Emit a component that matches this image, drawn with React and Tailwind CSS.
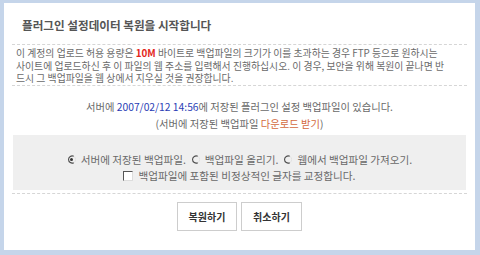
import React from 'react';

const font = { fontFamily: '"Noto Sans CJK KR", "Noto Sans", sans-serif' };

function Radio({ checked }) {
  return (
    <svg width="9" height="9" viewBox="0 0 9 9" className="inline-block shrink-0">
      <path d="M6.8 1.3 A3.6 3.6 0 1 0 6.8 7.7" fill="none" stroke="#4a4a4a" strokeWidth="1.1" />
      <path d="M6.8 1.3 A3.6 3.6 0 0 1 6.8 7.7" fill="none" stroke="#e2e2e2" strokeWidth="1" />
      {checked && <circle cx="4.5" cy="4.5" r="1.5" fill="#333" />}
    </svg>
  );
}

export default function App() {
  return (
    <div
      className="w-[480px] h-[255px] bg-[#c5d5ea] pt-[3px] pl-[4px] pr-[5px] pb-[5px] text-[#6a6a6a]"
      style={font}
    >
      <div className="h-full bg-white flex flex-col">
        <h1 className="pt-[14px] pl-[18px] text-[11.6px] leading-[16px] font-bold text-[#555]">
          플러그인 설정데이터 복원을 시작합니다
        </h1>
        <div className="mx-[8px] mt-[11px] border-t border-dashed border-[#d6d6d6]" />
        <p className="mx-[8px] px-[4px] pt-[2px] text-[9.85px] leading-[12.5px] whitespace-nowrap">
          이 계정의 업로드 허용 용량은 <b className="text-[#e3261c]">10M</b> 바이트로 백업파일의 크기가 이를 초과하는 경우 FTP 등으로 원하시는
          <br />
          사이트에 업로드하신 후 이 파일의 웹 주소를 입력해서 진행하십시오. 이 경우, 보안을 위해 복원이 끝나면 반
          <br />
          드시 그 백업파일을 웹 상에서 지우실 것을 권장합니다.
        </p>
        <div className="mx-[8px] border-t border-dashed border-[#d6d6d6]" />
        <div className="mt-[12px] text-center text-[10.3px] leading-[17px]">
          <p>
            서버에 <span className="text-[#2a3db5]">2007/02/12 14:56</span>에 저장된 플러그인 설정 백업파일이 있습니다.
          </p>
          <p>
            (서버에 저장된 백업파일 <span className="text-[#d4693d]">다운로드 받기</span>)
          </p>
        </div>
        <div className="mx-[9px] mt-[3px] bg-[#efefef] pt-[17px] pb-[6px] text-[10.6px] leading-[16px]">
          <div className="flex items-center justify-center gap-[5px]">
            <Radio checked />
            <span>서버에 저장된 백업파일.</span>
            <Radio />
            <span>백업파일 올리기.</span>
            <Radio />
            <span>웹에서 백업파일 가져오기.</span>
          </div>
          <div className="flex items-center justify-center gap-[5px]">
            <span className="inline-block w-[10px] h-[10px] bg-white border-t border-l border-[#555] border-r border-b border-r-[#ddd] border-b-[#ddd]" />
            <span>백업파일에 포함된 비정상적인 글자를 교정합니다.</span>
          </div>
        </div>
        <div className="mx-[8px] mt-[3px] border-t border-dashed border-[#d6d6d6]" />
        <div className="mt-[8px] flex justify-center gap-[4px]">
          <button className="w-[60px] h-[29px] bg-white border border-[#cdcdcd] text-[10px] font-bold text-[#333]">
            복원하기
          </button>
          <button className="w-[61px] h-[29px] bg-white border border-[#cdcdcd] text-[10px] font-bold text-[#333]">
            취소하기
          </button>
        </div>
      </div>
    </div>
  );
}
